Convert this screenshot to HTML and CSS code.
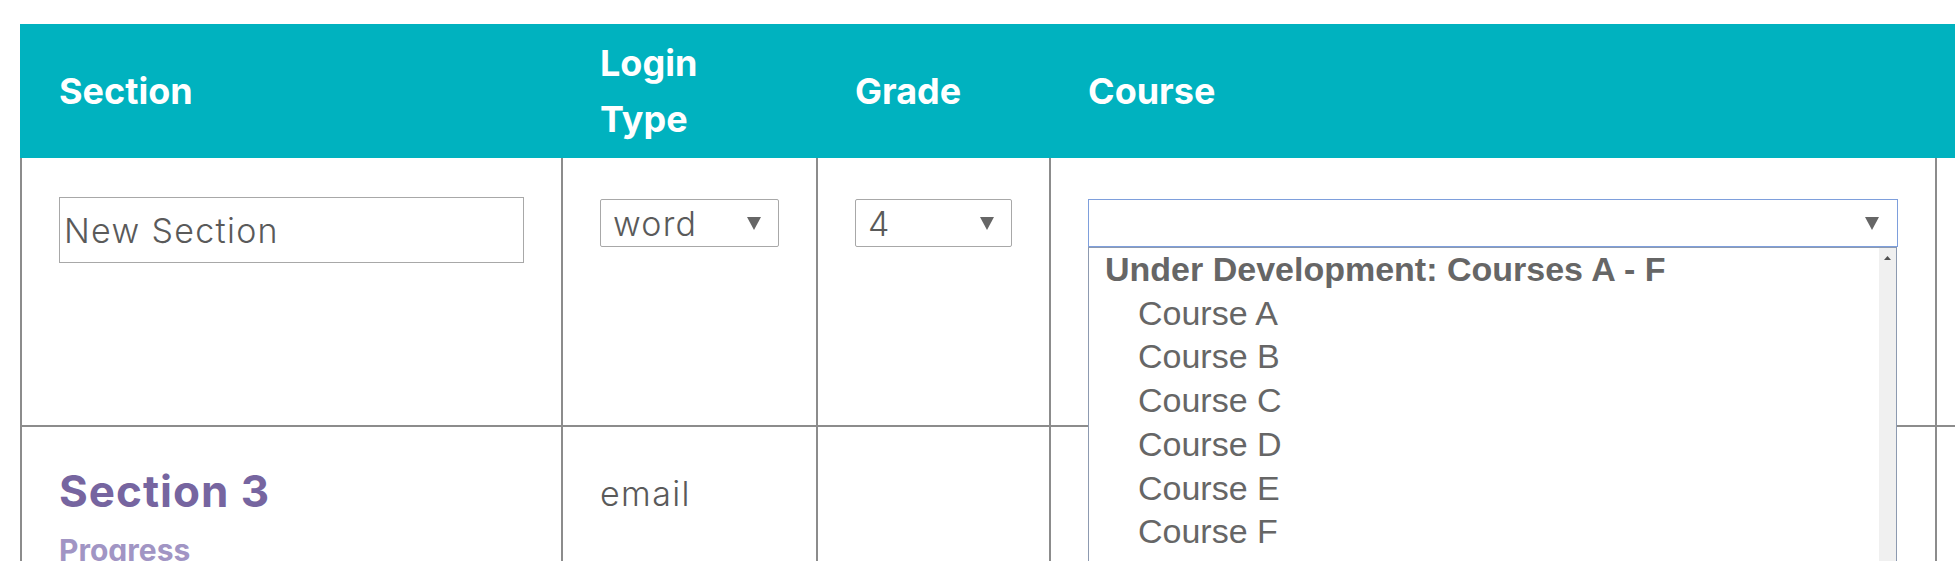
FILE: index.html
```html
<!DOCTYPE html>
<html lang="en">
<head>
<meta charset="utf-8">
<title>Sections</title>
<link rel="stylesheet" href="styles.css">
</head>
<body>
<div class="page">
  <div class="grid">
    <div class="th">Section</div>
    <div class="th">Login Type</div>
    <div class="th">Grade</div>
    <div class="th">Course</div>
    <div class="th"></div>

    <div class="td r1">
      <input class="name-input" type="text" value="New Section">
    </div>
    <div class="td r1">
      <div class="sel sel-login"><span>word</span><svg class="arrow" width="14" height="13" viewBox="0 0 14 13"><polygon points="0,0 14,0 7,13" /></svg></div>
    </div>
    <div class="td r1">
      <div class="sel sel-grade"><span>4</span><svg class="arrow" width="14" height="13" viewBox="0 0 14 13"><polygon points="0,0 14,0 7,13" /></svg></div>
    </div>
    <div class="td r1">
      <div class="course-wrap">
        <div class="sel sel-course"><span></span><svg class="arrow" width="14" height="13" viewBox="0 0 14 13"><polygon points="0,0 14,0 7,13" /></svg></div>
        <div class="dropdown">
          <div class="opt-group">Under Development: Courses A - F</div>
          <div class="opt">Course A</div>
          <div class="opt">Course B</div>
          <div class="opt">Course C</div>
          <div class="opt">Course D</div>
          <div class="opt">Course E</div>
          <div class="opt">Course F</div>
          <div class="scrollbar"><svg width="7" height="4" viewBox="0 0 7 4"><polygon points="0,4 7,4 3.5,0" /></svg></div>
        </div>
      </div>
    </div>
    <div class="td r1"></div>

    <div class="td r2">
      <div class="sec-name">Section 3</div>
      <div class="sec-link">Progress</div>
    </div>
    <div class="td r2"><div class="plain">email</div></div>
    <div class="td r2"></div>
    <div class="td r2"></div>
    <div class="td r2"></div>
  </div>
</div>
</body>
</html>
```

FILE: styles.css
```css
html, body {
  margin: 0;
  padding: 0;
  background: #ffffff;
  overflow: hidden;
}

body {
  font-family: Inter, "Open Sans", sans-serif;
  color: #646464;
}

.page {
  padding: 24px 0 0 20px;
}

.grid {
  display: grid;
  grid-template-columns: 541px 255px 233px 886px 300px;
  width: 2215px;
}

.th {
  box-sizing: border-box;
  height: 134px;
  background: #00b2bf;
  color: #ffffff;
  font-family: Inter, sans-serif;
  font-weight: 700;
  font-size: 36px;
  line-height: 56px;
  display: flex;
  align-items: center;
  padding: 0 40px 0 39px;
}

.td {
  box-sizing: border-box;
  border-left: 2px solid #8c8c8c;
  padding-left: 37px;
}

.r1 {
  height: 267px;
  padding-top: 39px;
}

.r2 {
  height: 200px;
  border-top: 2px solid #8c8c8c;
}

.name-input {
  box-sizing: border-box;
  display: block;
  width: 465px;
  height: 66px;
  margin: 0;
  border: 1px solid #a8a8a8;
  border-radius: 0;
  padding: 0 0 0 4px;
  font-family: Inter, sans-serif;
  font-weight: 300;
  font-size: 34px;
  letter-spacing: 1.3px;
  color: #5a5a5a;
  outline: none;
  background: #fff;
}

.sel {
  box-sizing: border-box;
  height: 48px;
  margin-top: 2px;
  border: 1px solid #a8a8a8;
  border-radius: 2px;
  display: flex;
  align-items: center;
  justify-content: space-between;
  padding: 0 17px 0 12px;
  font-weight: 300;
  font-size: 34px;
  letter-spacing: 1.2px;
  color: #5a5a5a;
  background: #fff;
}

.sel-login {
  width: 179px;
}

.sel-grade {
  width: 157px;
}

.sel-course {
  width: 810px;
  border-color: #7e9fdc;
  border-radius: 0;
  padding-right: 18px;
}

.arrow {
  display: block;
  fill: #666666;
}

.course-wrap {
  position: relative;
}

.dropdown {
  position: absolute;
  top: 100%;
  left: 0;
  box-sizing: border-box;
  width: 809px;
  height: 330px;
  border: 1px solid #8d9ab0;
  background: #ffffff;
  font-family: "Liberation Sans", Arial, sans-serif;
  color: #666666;
}

.opt-group {
  font-weight: 700;
  font-size: 34px;
  line-height: 43.7px;
  padding-left: 16px;
}

.opt {
  font-size: 34px;
  line-height: 43.7px;
  padding-left: 49px;
}

.scrollbar {
  position: absolute;
  top: 0;
  right: 0;
  bottom: 0;
  width: 17px;
  background: #f0f0f0;
  display: flex;
  justify-content: center;
  padding-top: 8px;
  box-sizing: border-box;
}

.scrollbar svg {
  display: block;
  fill: #505050;
}

.sec-name {
  padding-top: 38px;
  font-weight: 700;
  font-size: 44px;
  line-height: 52px;
  letter-spacing: 1px;
  color: #7665a0;
}

.sec-link {
  margin-top: 15px;
  font-weight: 700;
  font-size: 30px;
  line-height: 36px;
  color: #a195c4;
}

.plain {
  padding-top: 47px;
  font-weight: 300;
  font-size: 34px;
  line-height: 40px;
  letter-spacing: 1.4px;
  color: #5a5a5a;
}
```
